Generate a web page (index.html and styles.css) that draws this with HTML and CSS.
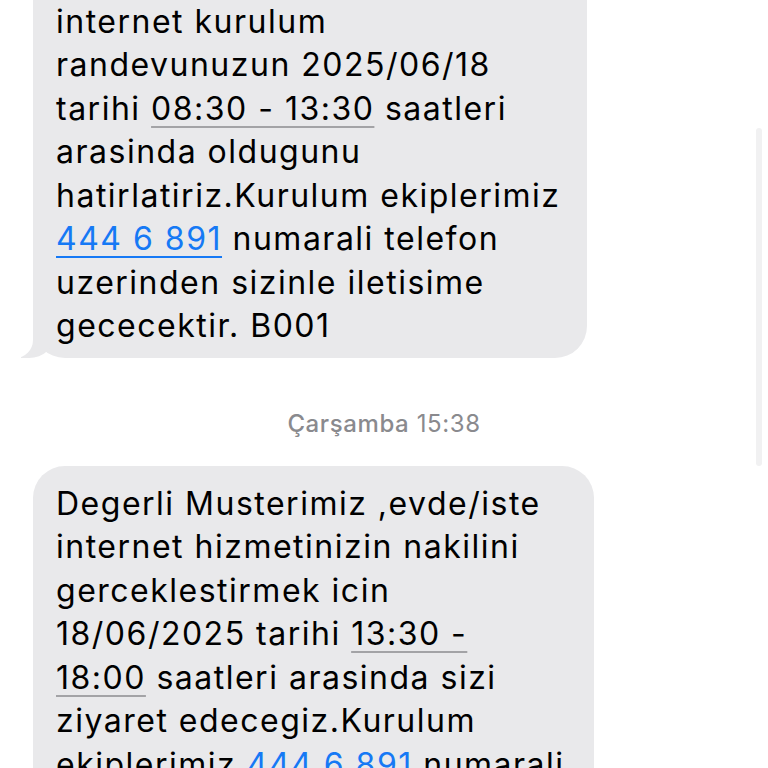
FILE: index.html
```html
<!DOCTYPE html>
<html lang="tr">
<head>
    <meta charset="UTF-8">
    <meta name="viewport" content="width=device-width, initial-scale=1.0">
    <title>Mesajlar</title>
    <link rel="stylesheet" href="styles.css">
</head>
<body>
    <div class="thread">
        <div class="bubble bubble-first tail">
            Degerli Musterimiz ,<br>
            internet kurulum<br>
            randevunuzun 2025/06/18<br>
            tarihi <span class="detect">08:30 - 13:30</span> saatleri<br>
            arasinda oldugunu<br>
            hatirlatiriz.Kurulum ekiplerimiz<br>
            <a class="phone" href="#">444 6 891</a> numarali telefon<br>
            uzerinden sizinle iletisime<br>
            gececektir. B001
        </div>

        <div class="stamp"><b>Çarşamba</b> 15:38</div>

        <div class="bubble bubble-second">
            Degerli Musterimiz ,evde/iste<br>
            internet hizmetinizin nakilini<br>
            gerceklestirmek icin<br>
            18/06/2025 tarihi <span class="detect">13:30 -<br>
            18:00</span> saatleri arasinda sizi<br>
            ziyaret edecegiz.Kurulum<br>
            ekiplerimiz <a class="phone" href="#">444 6 891</a> numarali<br>
            telefon uzerinden sizinle iletisime<br>
            gececektir. B001
        </div>
    </div>

    <div class="scroll-indicator"></div>
</body>
</html>
```

FILE: styles.css
```css
/* General Styles */
body {
    margin: 0;
    background: #ffffff;
    font-family: Inter, "Liberation Sans", sans-serif;
    color: #000;
    overflow: hidden;
}

/* Thread */
.thread {
    margin-top: -60px;
    display: flex;
    flex-direction: column;
    align-items: flex-start;
    padding-left: 33px;
}
.bubble {
    position: relative;
    box-sizing: border-box;
    background: #e9e9eb;
    border-radius: 32px;
    padding: 16px 20px 10px 23px;
    font-size: 32px;
    line-height: 43.5px;
    letter-spacing: 1.5px;
    white-space: nowrap;
}
.bubble-first {
    width: 554px;
}
.bubble-second {
    width: 561px;
}

/* Received tail */
.tail::before {
    content: "";
    position: absolute;
    bottom: 0;
    left: -12px;
    width: 34px;
    height: 34px;
    background: #e9e9eb;
    border-bottom-right-radius: 26px 24px;
}
.tail::after {
    content: "";
    position: absolute;
    bottom: 0;
    left: -44px;
    width: 44px;
    height: 34px;
    background: #ffffff;
    border-bottom-right-radius: 18px;
}

.detect {
    text-decoration: underline;
    text-decoration-color: #a3a3a6;
    text-decoration-thickness: 2px;
    text-underline-offset: 6px;
}
.phone {
    color: #1679f5;
    text-decoration: underline;
    text-decoration-thickness: 2px;
    text-underline-offset: 6px;
}

/* Timestamp */
.stamp {
    align-self: center;
    margin: 51px 0 27px -33px;
    font-size: 24px;
    line-height: 30px;
    letter-spacing: 0.6px;
    color: #8a8a8e;
}
.stamp b {
    font-weight: 500;
}

.scroll-indicator {
    position: absolute;
    top: 128px;
    right: 6px;
    width: 6px;
    height: 338px;
    border-radius: 3px;
    background: #f1f1f2;
}
```
